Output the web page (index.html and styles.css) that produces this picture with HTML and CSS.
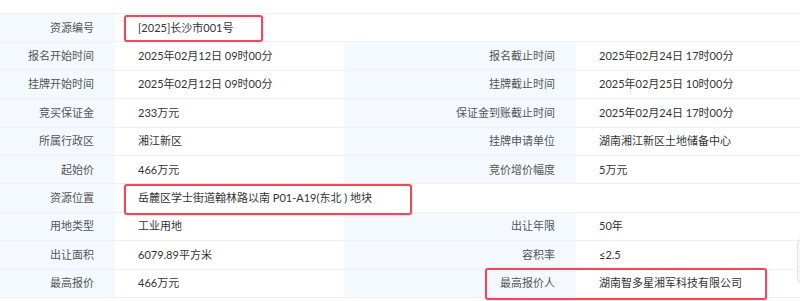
FILE: index.html
```html
<!DOCTYPE html>
<html>
<head>
<meta charset="utf-8">
<link rel="stylesheet" href="styles.css">
</head>
<body>
<div class="page">
  <table class="info">
    <colgroup>
      <col class="c1"><col class="c2"><col class="c3"><col class="c4">
    </colgroup>
    <tr><th>资源编号</th><td colspan="3">[2025]长沙市001号</td></tr>
    <tr><th>报名开始时间</th><td>2025年02月12日 09时00分</td><th>报名截止时间</th><td>2025年02月24日 17时00分</td></tr>
    <tr><th>挂牌开始时间</th><td>2025年02月12日 09时00分</td><th>挂牌截止时间</th><td>2025年02月25日 10时00分</td></tr>
    <tr><th>竞买保证金</th><td>233万元</td><th>保证金到账截止时间</th><td>2025年02月24日 17时00分</td></tr>
    <tr><th>所属行政区</th><td>湘江新区</td><th>挂牌申请单位</th><td>湖南湘江新区土地储备中心</td></tr>
    <tr><th>起始价</th><td>466万元</td><th>竞价增价幅度</th><td>5万元</td></tr>
    <tr><th>资源位置</th><td colspan="3">岳麓区学士街道翰林路以南 P01-A19(东北 ) 地块</td></tr>
    <tr><th>用地类型</th><td>工业用地</td><th>出让年限</th><td>50年</td></tr>
    <tr><th>出让面积</th><td>6079.89平方米</td><th>容积率</th><td>≤2.5</td></tr>
    <tr><th>最高报价</th><td>466万元</td><th>最高报价人</th><td>湖南智多星湘军科技有限公司</td></tr>
  </table>
  <div class="mark mark1"></div>
  <div class="mark mark2"></div>
  <div class="mark mark3"></div>
  <div class="side-tab"></div>
</div>
</body>
</html>
```

FILE: styles.css
```css
html, body {
  margin: 0;
  padding: 0;
  background: #fff;
}
body {
  font-family: Lato, "Noto Sans CJK SC", sans-serif;
  font-size: 11px;
  color: #333;
}
.page {
  position: relative;
  width: 800px;
  height: 301px;
  overflow: hidden;
  padding-top: 13px;
  box-sizing: border-box;
}
.info {
  width: 800px;
  border-collapse: collapse;
  table-layout: fixed;
}
.c1 { width: 115px; }
.c2 { width: 229px; }
.c3 { width: 232px; }
.c4 { width: 224px; }
.info th, .info td {
  height: 28.4px;
  padding: 0;
  border-top: 1px solid #eef0f3;
  border-bottom: 1px solid #eef0f3;
  box-sizing: border-box;
  white-space: nowrap;
  line-height: 16px;
}
.info th {
  background: #f3f9fe;
  color: #555;
  font-weight: normal;
  text-align: right;
  padding-right: 21px;
}
.info td {
  background: #fff;
  color: #333;
  text-align: left;
  padding-left: 23px;
}
.mark {
  position: absolute;
  border: 2px solid #f0485b;
  border-radius: 3px;
  box-sizing: border-box;
  box-shadow: 0 0 2px rgba(240, 72, 91, 0.35);
}
.mark1 { left: 124px; top: 15px; width: 139px; height: 27px; }
.mark2 { left: 124px; top: 184px; width: 288px; height: 31px; }
.mark3 { left: 485px; top: 268px; width: 282px; height: 32px; }
.side-tab {
  position: absolute;
  left: 797px;
  top: 238px;
  width: 12px;
  height: 44px;
  background: #f6f6f6;
  border: 1px solid #e3e3e3;
  border-radius: 6px;
}
```
